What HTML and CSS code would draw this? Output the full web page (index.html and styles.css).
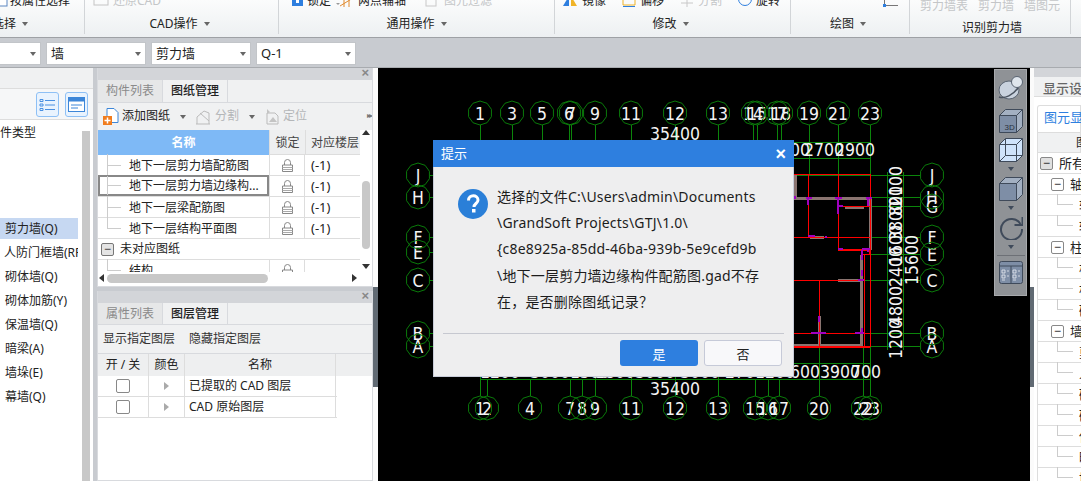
FILE: index.html
```html
<!DOCTYPE html>
<html lang="zh-CN">
<head>
<meta charset="utf-8">
<title>GTJ</title>
<link rel="stylesheet" href="styles.css">
</head>
<body>
<div class="app">
  <header class="ribbon">
    <section class="group g1">
      <div class="rtop"><svg class="ic" width="8" height="7"><rect x="-3" y="-5" width="10" height="11" fill="#fff" stroke="#5a86c0"/></svg><span class="ti t1">按属性选择</span></div>
      <div class="rlabel la1"><span>选择</span><i class="caret"></i></div>
    </section>
    <section class="group g2">
      <div class="rtop dim"><svg class="ic" width="16" height="7"><rect x="1" y="-6" width="14" height="11" fill="none" stroke="#c4c4c4"/></svg><span class="ti">还原CAD</span></div>
      <div class="rlabel"><span>CAD操作</span><i class="caret"></i></div>
    </section>
    <section class="group g3">
      <div class="rtop">
        <svg class="ic" width="11" height="7"><rect x="0" y="-5" width="11" height="11" fill="#2e7fdf"/><rect x="4" y="0" width="3" height="3" fill="#fff"/></svg><span class="ti t2">锁定</span><i class="caret tiny"></i>
        <svg class="ic i2" width="14" height="7"><path d="M0 6 L13 -2 M4 -3 L4 7 M9 -3 L9 7" stroke="#e08a2e" fill="none"/></svg><span class="ti t2">两点辅轴</span><i class="caret tiny"></i>
        <span class="dim rt"><svg class="ic" width="15" height="7"><rect x="1" y="-5" width="10" height="11" fill="none" stroke="#c8c8c8"/></svg><span class="ti">图元过滤</span></span>
      </div>
      <div class="rlabel"><span>通用操作</span><i class="caret"></i></div>
    </section>
    <section class="group g4">
      <div class="rtop">
        <svg class="ic" width="15" height="7"><path d="M0 6 L6 -4 L6 6Z" fill="#2e7fdf"/><path d="M8 6 L8 -4 L14 6Z" fill="#f0b428"/></svg><span class="ti t3">镜像</span>
        <svg class="ic" width="14" height="7"><path d="M1 -3 V5 H13 V-3" fill="none" stroke="#f0b428"/><path d="M1 6.500 H13" stroke="#2e7fdf"/></svg><span class="ti t3">偏移</span>
        <span class="dim rt0"><svg class="ic" width="14" height="7"><path d="M7 -3 V7 M1 3 H13" stroke="#c8c8c8"/></svg><span class="ti t3">分割</span></span>
        <svg class="ic" width="14" height="7"><circle cx="7" cy="-1" r="6.500" fill="none" stroke="#2e7fdf"/></svg><span class="ti">旋转</span>
      </div>
      <div class="rlabel"><span>修改</span><i class="caret"></i></div>
    </section>
    <section class="group g5">
      <div class="rtop"><svg class="ic" width="16" height="7"><path d="M1.500 -2 V5.500 H15" fill="none" stroke="#777"/><rect x="0" y="4" width="3" height="3" fill="#2e7fdf"/></svg></div>
      <div class="rlabel"><span>绘图</span><i class="caret"></i></div>
    </section>
    <section class="group g6">
      <div class="rtop tall dim"><span class="ti t4">剪力墙表</span><span class="ti t4">剪力墙</span><span class="ti">墙图元</span></div>
      <div class="rlabel low"><span>识别剪力墙</span></div>
    </section>
    <section class="group g7"></section>
  </header>

  <div class="combos">
    <div class="combo c0"><i class="caret"></i></div>
    <div class="combo"><span>墙</span><i class="caret"></i></div>
    <div class="combo"><span>剪力墙</span><i class="caret"></i></div>
    <div class="combo"><span>Q-1</span><i class="caret"></i></div>
  </div>

  <main class="work">
    <aside class="nav">
      <div class="nav-band"></div>
      <div class="nav-tools">
        <button class="tbtn"><svg width="17" height="15" viewBox="0 0 17 15"><path d="M1 2.500h3v2H1zM1 7h3v2H1zM1 11.500h3v2H1z" fill="none" stroke="#4a90e2"/><path d="M6 3.500h10M6 8h10M6 12.500h10" stroke="#4a90e2"/></svg></button>
        <button class="tbtn"><svg width="17" height="15" viewBox="0 0 17 15"><rect x=".5" y=".5" width="16" height="14" fill="#fff" stroke="#3d86d8"/><rect x=".5" y=".5" width="16" height="4" fill="#3d86d8"/><path d="M3 8h11M3 11h7" stroke="#3d86d8"/></svg></button>
      </div>
      <div class="nav-body">
        <div class="nav-list">
          <div class="nav-head">构件类型</div>
          <div class="nav-item sel">剪力墙(Q)</div>
          <div class="nav-item">人防门框墙(RF)</div>
          <div class="nav-item">砌体墙(Q)</div>
          <div class="nav-item">砌体加筋(Y)</div>
          <div class="nav-item">保温墙(Q)</div>
          <div class="nav-item">暗梁(A)</div>
          <div class="nav-item">墙垛(E)</div>
          <div class="nav-item">幕墙(Q)</div>
        </div>
        <div class="nav-scroll"></div>
      </div>
    </aside>

    <div class="mid">
      <section class="panel up">
        <div class="grip"><span class="x">×</span></div>
        <div class="tabs"><span class="tab off">构件列表</span><span class="tab on">图纸管理</span></div>
        <div class="tools">
          <svg class="ti-ic" width="16" height="18" viewBox="0 0 16 18"><path d="M4 .5h7l4 4v10H4z" fill="#fff" stroke="#3d86d8"/><rect x="0" y="8" width="9" height="9" fill="#f07c1e"/><path d="M4.500 9.500v6M1.500 12.500h6" stroke="#fff" stroke-width="1.500"/></svg>
          <span class="lbl a">添加图纸</span><i class="caret c1"></i>
          <svg class="ti-ic s2" width="16" height="16" viewBox="0 0 16 16"><path d="M1 15h14M2 15V8l7-6 5 2v11M5 4l9 8" fill="none" stroke="#bbb"/></svg>
          <span class="lbl g s">分割</span><i class="caret c2"></i>
          <svg class="ti-ic s3" width="15" height="17" viewBox="0 0 15 17"><path d="M3 5h8l3 3v8H3z" fill="none" stroke="#bbb"/><path d="M3 1l3 3-3 2zM5 14l4-5 4 5z" fill="#c4c4c4"/></svg>
          <span class="lbl g">定位</span><span class="more">▸▸</span>
        </div>
        <div class="tbl-wrap">
          <div class="tbl">
            <div class="tr th"><span class="blue">名称</span><span class="hc">锁定</span><span class="hc clip">对应楼层</span></div>
            <div class="tr"><span class="nm tree">地下一层剪力墙配筋图</span><span class="lk"><svg width="11" height="13" viewBox="0 0 11 13"><use href="#lock"/></svg></span><span class="fl">(-1)</span></div>
            <div class="tr cur"><span class="nm tree">地下一层剪力墙边缘构...</span><span class="lk"><svg width="11" height="13" viewBox="0 0 11 13"><use href="#lock"/></svg></span><span class="fl">(-1)</span></div>
            <div class="tr"><span class="nm tree">地下一层梁配筋图</span><span class="lk"><svg width="11" height="13" viewBox="0 0 11 13"><use href="#lock"/></svg></span><span class="fl">(-1)</span></div>
            <div class="tr"><span class="nm tree end">地下一层结构平面图</span><span class="lk"><svg width="11" height="13" viewBox="0 0 11 13"><use href="#lock"/></svg></span><span class="fl">(-1)</span></div>
            <div class="tr grp"><span class="minus">−</span><span>未对应图纸</span></div>
            <div class="tr"><span class="nm tree end">结构</span><span class="lk"><svg width="11" height="13" viewBox="0 0 11 13"><use href="#lock"/></svg></span><span class="fl"></span></div>
          </div>
          <div class="vbar"><i class="up-a"></i><b></b><i class="dn-a"></i></div>
        </div>
        <div class="hbar"><i class="lf-a"></i><b></b><i class="rt-a"></i></div>
      </section>

      <section class="panel low">
        <div class="grip"><span class="x">×</span></div>
        <div class="tabs short"><span class="tab off">属性列表</span><span class="tab on">图层管理</span></div>
        <div class="tools two"><span>显示指定图层</span><span>隐藏指定图层</span></div>
        <div class="ltbl">
          <div class="lr lh"><span>开 / 关</span><span>颜色</span><span>名称</span></div>
          <div class="lr"><span><i class="cb"></i></span><span><i class="tri"></i></span><span class="ln">已提取的 CAD 图层</span></div>
          <div class="lr"><span><i class="cb"></i></span><span><i class="tri"></i></span><span class="ln">CAD 原始图层</span></div>
        </div>
      </section>
    </div>

    <div class="split"><b></b></div>

    <div class="canvas">
      <svg class="draw" viewBox="378 68 652 413" width="652" height="413">
        <defs>
          <polygon id="bub" points="0,-12 7.050,-9.710 11.410,-3.710 11.410,3.710 7.050,9.710 0,12 -7.050,9.710 -11.410,3.710 -11.410,-3.710 -7.050,-9.710" fill="none" stroke="#0a7a0a" stroke-width="1"/>
          <g id="lock"><path d="M2.500 6V3.500a3 3 0 0 1 6 0V6" fill="none" stroke="#888"/><path d="M.5 6h10v6.500H.5z" fill="#fff" stroke="#888"/><path d="M.5 8.500h10M.5 10.500h10" stroke="#aaa"/></g>
        </defs>
        <g class="gl">
          <path d="M480 125V396M487 379V396M512 125V140M530 379V396M542 125V140M569 125V140M571 125V140M570 379V396M582 379V396M595 125V396M631 125V396M675 125V396M718 125V396M753 125V140M757 125V140M755 379V396M768 379V396M779 379V396M777 125V140M781 125V140M809 125V174M838 125V174M870 125V174M819 347V396M863 347V396M870 347V396"/>
          <path d="M430 175H920M430 197H920M430 237H920M430 252H440M430 280H920M430 333H920M430 346H920M870 206H920M870 254H920"/>
          <path d="M480 379H870M794 363H870M794 158H870M790 142H870M887 172V350M903 172V350"/>
        </g>
        <g class="gy">
          <path d="M795 174V198H870V250M845 207H864M810 237H824M838 280H862M861 255V345H794M819 316V345"/>
        </g>
        <g class="rd">
          <path d="M794 174H870V347M808 174V237M838 174V250M794 237H870M838 206H870M862 254H870M794 280H862M819 280V347M794 333H870M864 254V346"/>
          <path class="thick" d="M838 250H870V254M794 347H870"/>
        </g>
        <g class="mg">
          <path d="M795 196V199M806 198H812M808 198V205M835 198H842M838 198V210M866 198H872M868 198V206M838 206H843M838 210V214M808 236H815M825 237H827M838 249H843M862 249H870M868 248V252M862 250V260M862 270V276M858 280H864M819 316V322M811 333H826M855 333H864M862 328V333"/>
        </g>
        <g class="tx">
          <text x="480" y="120">1</text><text x="512" y="120">3</text><text x="542" y="120">5</text><text x="569" y="120">6</text><text x="571" y="120">7</text><text x="595" y="120">9</text><text x="631" y="120">11</text><text x="675" y="120">12</text><text x="718" y="120">13</text><text x="753" y="120">14</text><text x="757" y="120">15</text><text x="777" y="120">17</text><text x="781" y="120">18</text><text x="809" y="120">19</text><text x="838" y="120">21</text><text x="870" y="120">23</text>
          <text x="675" y="140">35400</text><text x="675" y="395">35400</text>
          <text x="790" y="156">2100</text><text x="824" y="156">2700</text><text x="855" y="156">2900</text>
          <text x="500" y="378">1200</text><text x="550" y="378">3000</text><text x="590" y="378">1500</text><text x="615" y="378">1800</text><text x="655" y="378">3000</text><text x="700" y="378">3000</text><text x="745" y="378">2700</text><text x="775" y="378">1200</text>
          <text x="805" y="378">600</text><text x="840" y="378">3900</text><text x="866" y="378">700</text>
          <text x="480" y="415">1</text><text x="487" y="415">2</text><text x="530" y="415">4</text><text x="570" y="415">7</text><text x="582" y="415">8</text><text x="595" y="415">9</text><text x="631" y="415">11</text><text x="675" y="415">12</text><text x="718" y="415">13</text><text x="755" y="415">15</text><text x="768" y="415">16</text><text x="779" y="415">17</text><text x="819" y="415">20</text><text x="863" y="415">22</text><text x="870" y="415">23</text>
          <text x="418" y="181.500">J</text><text x="418" y="203.500">H</text><text x="418" y="243.500">F</text><text x="418" y="258.500">E</text><text x="418" y="286.500">C</text><text x="418" y="339.500">B</text><text x="418" y="352.500">A</text>
          <text x="932" y="181.500">J</text><text x="932" y="203.500">H</text><text x="932" y="212.500">G</text><text x="932" y="243.500">F</text><text x="932" y="260.500">E</text><text x="932" y="286.500">C</text><text x="932" y="339.500">B</text><text x="932" y="352.500">A</text>
          <text transform="translate(902 339) rotate(-90)">1200</text><text transform="translate(902 306) rotate(-90)">4800</text><text transform="translate(902 267) rotate(-90)">2400</text><text transform="translate(902 245) rotate(-90)">1600</text><text transform="translate(902 221) rotate(-90)">3800</text><text transform="translate(902 201) rotate(-90)">800</text><text transform="translate(902 186) rotate(-90)">2100</text>
          <text transform="translate(918 260) rotate(-90)">15600</text>
        </g>
        <g>
          <use href="#bub" x="480" y="113"/><use href="#bub" x="512" y="113"/><use href="#bub" x="542" y="113"/><use href="#bub" x="569" y="113"/><use href="#bub" x="571" y="113"/><use href="#bub" x="595" y="113"/><use href="#bub" x="631" y="113"/><use href="#bub" x="675" y="113"/><use href="#bub" x="718" y="113"/><use href="#bub" x="753" y="113"/><use href="#bub" x="757" y="113"/><use href="#bub" x="777" y="113"/><use href="#bub" x="781" y="113"/><use href="#bub" x="809" y="113"/><use href="#bub" x="838" y="113"/><use href="#bub" x="870" y="113"/>
          <use href="#bub" x="480" y="408"/><use href="#bub" x="487" y="408"/><use href="#bub" x="530" y="408"/><use href="#bub" x="570" y="408"/><use href="#bub" x="582" y="408"/><use href="#bub" x="595" y="408"/><use href="#bub" x="631" y="408"/><use href="#bub" x="675" y="408"/><use href="#bub" x="718" y="408"/><use href="#bub" x="755" y="408"/><use href="#bub" x="768" y="408"/><use href="#bub" x="779" y="408"/><use href="#bub" x="819" y="408"/><use href="#bub" x="863" y="408"/><use href="#bub" x="870" y="408"/>
          <use href="#bub" x="418" y="175"/><use href="#bub" x="418" y="197"/><use href="#bub" x="418" y="237"/><use href="#bub" x="418" y="252"/><use href="#bub" x="418" y="280"/><use href="#bub" x="418" y="333"/><use href="#bub" x="418" y="346"/>
          <use href="#bub" x="932" y="175"/><use href="#bub" x="932" y="197"/><use href="#bub" x="932" y="206"/><use href="#bub" x="932" y="237"/><use href="#bub" x="932" y="254"/><use href="#bub" x="932" y="280"/><use href="#bub" x="932" y="333"/><use href="#bub" x="932" y="346"/>
        </g>
      </svg>

      <div class="viewbar">
        <svg class="v-sphere" width="26" height="26" viewBox="0 0 26 26"><ellipse cx="11" cy="15" rx="10" ry="9" fill="#c9d2de" stroke="#5a6472"/><circle cx="19" cy="7" r="5.500" fill="#dfe5ec" stroke="#5a6472"/><path d="M1 22c6 2 14-2 19-9" fill="none" stroke="#4a5360" stroke-width="1.500"/></svg>
        <svg width="24" height="24" viewBox="0 0 24 24"><path d="M.5 6.500l6-6h17v17l-6 6z" fill="#a3b0c2" stroke="#3f4a5a"/><path d="M.5 6.500h17v17H.5z" fill="#7e8ea6" stroke="#3f4a5a"/><path d="M17.500 6.500l6-6" stroke="#3f4a5a"/><text class="v3d" x="5.500" y="21">3D</text></svg>
        <svg width="24" height="24" viewBox="0 0 24 24"><path d="M.5 6.500l6-6h17v17l-6 6H.5z" fill="#cfe3fb" stroke="#3f4a5a"/><path d="M.5 6.500h17v17M17.500 6.500l6-6M6.500 .5v17h17M.5 23.500l6-6" fill="none" stroke="#3f4a5a"/></svg>
        <i class="v-c"></i>
        <svg width="24" height="24" viewBox="0 0 24 24"><path d="M.5 6.500l6-6h17v17l-6 6z" fill="#a3b0c2" stroke="#3f4a5a"/><path d="M.5 6.500h17v17H.5z" fill="#7e8ea6" stroke="#3f4a5a"/><path d="M17.500 6.500l6-6" stroke="#3f4a5a"/></svg>
        <i class="v-c"></i>
        <svg width="24" height="24" viewBox="0 0 24 24"><path d="M21.500 8A10.500 10.500 0 1 0 23 13" fill="none" stroke="#3f4a5a" stroke-width="2"/><path d="M23.500 1v8h-8" fill="none" stroke="#3f4a5a" stroke-width="2"/></svg>
        <i class="v-c"></i>
        <hr class="v-hr">
        <svg width="24" height="23" viewBox="0 0 24 23"><rect x=".5" y=".5" width="23" height="22" rx="2" fill="#7e8ea6" stroke="#3f4a5a"/><path d="M.5 5h23M12 5v18" stroke="#3f4a5a"/><path d="M3 9h3v3H3zM3 14h3v3H3zM3 19h3M14 9h3v3h-3zM14 14h3v3h-3zM14 19h3M8 10h2M8 15h2M19 10h2M19 15h2" fill="none" stroke="#e8ecf2" stroke-width=".8"/></svg>
      </div>

      <div class="dialog" role="dialog">
        <div class="d-title"><span>提示</span><span class="d-x">×</span></div>
        <div class="d-body">
          <svg class="d-icon" width="30" height="30" viewBox="0 0 30 30"><circle cx="15" cy="15" r="15" fill="#2a7fd8"/><path d="M10.500 11.500c0-6.500 9.500-6 9.500-.5 0 3.500-4 3.500-4 7" fill="none" stroke="#fff" stroke-width="3"/><rect x="14" y="20" width="3.500" height="3.500" fill="#fff"/></svg>
          <p class="d-text">选择的文件C:\Users\admin\Documents<br>\GrandSoft Projects\GTJ\1.0\<br>{c8e8925a-85dd-46ba-939b-5e9cefd9b<br>\地下一层剪力墙边缘构件配筋图.gad不存<br>在，是否删除图纸记录？</p>
        </div>
        <div class="d-foot"><button class="yes">是</button><button class="no">否</button></div>
      </div>
    </div>

    <div class="split right"><b></b></div>

    <aside class="side">
      <div class="s-band"></div>
      <div class="s-tab">显示设置</div>
      <div class="s-sub"><span>图元显示</span></div>
      <div class="s-head">图层</div>
      <div class="s-r r0"><i class="mi dark">−</i>所有构件</div>
      <div class="s-r r1"><i class="mi">−</i>轴网</div>
      <div class="s-r r2"><u></u>轴线</div>
      <div class="s-r r2"><u></u>辅轴</div>
      <div class="s-r r1"><i class="mi">−</i>柱</div>
      <div class="s-r r2"><u></u>柱</div>
      <div class="s-r r2"><u></u>构造柱</div>
      <div class="s-r r2"><u></u>砌体柱</div>
      <div class="s-r r1"><i class="mi">−</i>墙</div>
      <div class="s-r r2"><u></u>剪力墙</div>
      <div class="s-r r2"><u></u>人防门框墙</div>
      <div class="s-r r2"><u></u>砌体墙</div>
      <div class="s-r r2"><u></u>砌体加筋</div>
      <div class="s-r r2"><u></u>保温墙</div>
      <div class="s-r r2"><u></u>暗梁</div>
      <div class="s-r r2"><u></u>墙垛</div>
    </aside>
  </main>
</div>
</body>
</html>
```
FILE: styles.css
```css
* { box-sizing: border-box; }
html, body { margin: 0; height: 100%; overflow: hidden; }
body { font: 12px/1.2 "Noto Sans", "Noto Sans CJK SC", sans-serif; color: #222; }
.app { width: 1081px; height: 481px; display: flex; flex-direction: column; background: #c8cbd0; overflow: hidden; }

/* ribbon */
.ribbon { height: 38px; display: flex; background: linear-gradient(#fbfcfc, #edf0f2); border-bottom: 1px solid #9ea1a5; flex: none; }
.group { display: flex; flex-direction: column; border-right: 1px solid #d2d5d8; height: 34px; flex: none; }
.g1 { width: 85px; }
.g2 { width: 194px; padding-left: 8px; }
.g3 { width: 276px; padding-left: 13px; }
.g4 { width: 236px; padding-left: 8px; }
.g5 { width: 119px; padding-left: 92px; }
.g6 { width: 161px; padding-left: 10px; }
.g7 { width: 10px; border: 0; }
.rtop { height: 7px; flex: none; overflow: hidden; display: flex; align-items: flex-end; white-space: nowrap; }
.rtop.tall { height: 12px; }
.rtop .ic { flex: none; margin-right: 4px; }
.ti { display: block; line-height: 14px; margin-bottom: -1px; flex: none; }
.t1 { margin-left: -2px; }
.t2 { width: 49px; }
.t2 + .caret { margin-right: 0; }
.t3 { width: 40px; }
.t4 { margin-right: 10px; }
.i2 { margin-left: 0; }
.dim { color: #c4c6c8; }
.rt { display: flex; align-items: flex-end; margin-left: 34px; }
.rt0 { display: flex; align-items: flex-end; }
.rlabel { flex: 1; display: flex; align-items: center; justify-content: center; gap: 6px; color: #222; padding-top: 10px; font-size: 12px; margin-bottom: 3px; }
.g2 .rlabel, .g4 .rlabel { margin-left: -12px; }
.g3 .rlabel { margin-left: -13px; }
.g5 .rlabel { margin-left: -96px; }
.g6 .rlabel { margin-left: -6px; }
.la1 { justify-content: flex-start; margin-left: -8px; }
.rlabel.low { padding-top: 9px; }
.caret { display: inline-block; width: 0; height: 0; border: 3.500px solid transparent; border-top: 4px solid #666; border-bottom: 0; flex: none; }
.tiny { margin: 0 8px 2px -20px; border-top-color: #999; border-width: 2px; border-top-width: 2px; border-bottom: 0; }

/* combos */
.combos { height: 30px; flex: none; display: flex; gap: 5px; padding-top: 4px; border-bottom: 1px solid #a8abaf; }
.combo { width: 100px; height: 23px; background: #fff; border: 1px solid #c2c5c9; display: flex; align-items: center; justify-content: space-between; padding: 0 4px; font-size: 13px; }
.combo .caret { margin-left: auto; }
.c0 { width: 41px; border-left: 0; }

/* main */
.work { flex: 1; min-height: 0; display: flex; }
.nav { width: 93px; flex: none; background: #fff; display: flex; flex-direction: column; margin-right: 4px; overflow: hidden; }
.nav-band { height: 21px; background: #f0f1f2; border-bottom: 1px solid #ddd; flex: none; }
.nav-tools { height: 31px; flex: none; display: flex; justify-content: flex-end; gap: 6px; padding: 3px 5px 0 0; border-bottom: 1px solid #ddd; background: #f6f7f8; }
.tbtn { width: 23px; height: 25px; padding: 0; border: 1px solid #8ec0f5; border-radius: 3px; background: #e9f3fe; display: flex; align-items: center; justify-content: center; }
.nav-body { flex: 1; display: flex; min-height: 0; }
.nav-list { width: 82px; flex: none; overflow: hidden; }
.nav-head { margin: 5px 0 77px -12px; white-space: nowrap; height: 16px; line-height: 16px; }
.nav-item { height: 24px; line-height: 23px; padding-left: 5px; white-space: nowrap; overflow: hidden; width: 78px; }
.nav-item:nth-child(3) { padding-left: 4px; }
.sel { height: 21px; line-height: 21px; margin-bottom: 2px; background: #c6d8f2; }
.nav-scroll { width: 8px; background: #c8c8c8; margin-top: 11px; }
.mid { width: 276px; flex: none; display: flex; flex-direction: column; gap: 4px; }
.panel { background: #fff; border: 1px solid #d8dade; border-top: 0; display: flex; flex-direction: column; overflow: hidden; }
.panel.up { height: 219px; flex: none; }
.panel.low { flex: 1; padding: 0; }
.grip { height: 12px; background: #d3d5d9; flex: none; position: relative; }
.x { position: absolute; right: 3px; top: -3px; font: bold 13px/15px "Liberation Sans", sans-serif; color: #888; }
.tabs { height: 23px; flex: none; display: flex; background: #f0f1f2; border-bottom: 1px solid #d8dade; }
.tabs.short { height: 22px; }
.tab { width: 65px; text-align: center; line-height: 22px; font-size: 12px; border-right: 1px solid #d8dade; }
.off { color: #8a8a8a; background: #e6e7e8; }
.on { background: #f0f1f2; font-weight: 500; color: #222; }
.tools { height: 27px; flex: none; background: #f0f1f2; display: flex; align-items: center; padding-left: 5px; position: relative; }
.ti-ic { flex: none; margin-right: 3px; }
.lbl.a { width: 58px; }
.lbl.s { width: 34px; }
.lbl.g { color: #b4b6b8; }
.c1 { margin-right: 9px; }
.c2 { margin-right: 9px; }
.s3, .s2 { margin-right: 4px; }
.more { position: absolute; right: 1px; top: 7px; font-size: 8px; color: #777; letter-spacing: -2px; }
.tbl-wrap { flex: none; height: 142px; display: flex; overflow: hidden; }
.tbl { width: 262px; flex: none; overflow: hidden; }
.tr { display: grid; grid-template-columns: 171px 36px 55px; height: 21px; border-bottom: 1px solid #ddd; align-items: center; }
.th { height: 25px; background: #eeeff0; }
.blue { background: #7eb9f6; color: #fff; font-weight: 700; text-align: center; line-height: 26px; height: 25px; }
.hc { text-align: center; white-space: nowrap; overflow: hidden; border-left: 1px solid #ddd; line-height: 26px; height: 25px; color: #444; }
.clip { text-align: left; padding-left: 5px; }
.nm { padding-left: 31px; position: relative; height: 20px; line-height: 22px; white-space: nowrap; }
.tree::before { content: ""; position: absolute; left: 9px; top: -1px; bottom: -1px; border-left: 1px solid #ccc; }
.tree::after { content: ""; position: absolute; left: 9px; width: 14px; top: 10px; border-top: 1px solid #ccc; }
.tree.end::before { bottom: 9px; }
.lk { border-left: 1px solid #ddd; border-right: 1px solid #ddd; height: 20px; display: flex; align-items: center; justify-content: center; }
.fl { padding-left: 6px; font-size: 13px; height: 20px; line-height: 21px; }
.cur .nm { border: 2px solid #888; height: 21px; line-height: 18px; padding-left: 29px; margin-top: -1px; }
.cur .nm::before { left: 7px; }
.cur .nm::after { left: 7px; top: 8px; }
.grp { display: flex; gap: 6px; padding: 1px 0 0 3px; }
.minus { width: 13px; height: 13px; border: 1px solid #777; border-radius: 2px; background: #e4e4e4; font: 12px/10px "Liberation Sans", sans-serif; text-align: center; color: #333; }
.vbar { flex: 1; position: relative; }
.vbar b { position: absolute; left: 2px; top: 51px; width: 8px; height: 68px; border-radius: 4px; background: #c8c8c8; }
.up-a, .dn-a, .lf-a, .rt-a { position: absolute; width: 0; height: 0; border: 4px solid transparent; }
.up-a { left: 2px; top: 0; border-bottom: 5px solid #333; border-top: 0; }
.dn-a { left: 2px; top: 134px; border-top: 5px solid #333; border-bottom: 0; }
.hbar { height: 13px; flex: none; position: relative; }
.hbar b { position: absolute; left: 9px; top: 2px; width: 161px; height: 9px; border-radius: 5px; background: #c8c8c8; }
.lf-a { left: 1px; top: 2px; border-right: 5px solid #333; border-left: 0; }
.rt-a { left: 254px; top: 2px; border-left: 5px solid #333; border-right: 0; }
.two { gap: 14px; height: 29px; border-bottom: 1px solid #d8dade; color: #333; }
.ltbl { display: flex; flex-direction: column; }
.lr { display: grid; grid-template-columns: 51px 36px 151px; height: 21px; align-items: center; width: 239px; border-bottom: 1px solid #ddd; }
.lr span { height: 20px; display: flex; align-items: center; justify-content: center; border-right: 1px solid #ddd; }
.lh { height: 22px; background: #eeeff0; width: 100%; border-bottom: 0; }
.lh span { height: 22px; font-size: 12px; }
.lh span:last-child { width: 151px; }
.lr .ln { justify-content: flex-start; padding-left: 4px; }
.cb { width: 14px; height: 14px; border: 1px solid #888; border-radius: 2px; background: #fff; }
.tri { width: 0; height: 0; border-left: 5px solid #aaa; border-top: 4px solid transparent; border-bottom: 4px solid transparent; }

/* splitters */
.split { width: 5px; flex: none; background: #fbfbfb; padding-top: 219px; }
.split b { display: block; height: 100px; background: #616a73; }
.split.right { width: 4px; }

/* canvas */
.canvas { width: 652px; flex: none; background: #000; position: relative; overflow: hidden; }
.draw { display: block; }
.gl path { fill: none; stroke: #0b850b; stroke-width: 1; shape-rendering: crispEdges; }
.rd path { fill: none; stroke: #ff0000; stroke-width: 1; shape-rendering: crispEdges; }
.rd .thick { stroke-width: 2; }
.gy path { fill: none; stroke: #8a7470; stroke-width: 3; shape-rendering: crispEdges; }
.mg path { fill: none; stroke: #a000c0; stroke-width: 2.500; shape-rendering: crispEdges; }
.tx text { fill: #f4f4f4; font: 17.500px "DejaVu Sans Condensed", "Liberation Sans", sans-serif; text-anchor: middle; }

.viewbar { position: absolute; left: 616px; top: 1px; width: 33px; height: 227px; background: #8f9296; border: 1px solid #a8aaad; display: flex; flex-direction: column; align-items: center; padding-top: 5px; }
.viewbar svg { flex: none; margin-bottom: 5px; }
.viewbar .v-sphere { margin-bottom: 8px; }
.v-c { width: 0; height: 0; border: 3.500px solid transparent; border-top: 4px solid #3f4a5a; border-bottom: 0; margin-bottom: 6px; flex: none; }
.v-hr { width: 28px; border: 0; border-top: 1px solid #6d7076; margin: 0 0 5px; flex: none; }
.v3d { font: 8px "Liberation Sans", sans-serif; fill: #2a3240; }

.dialog { position: absolute; left: 55px; top: 72px; width: 361px; height: 237px; background: #eeeeef; border: 1px solid #c8ccd8; border-top: 0; display: flex; flex-direction: column; }
.d-title { height: 27px; flex: none; background: #2e7fdf; color: #fff; display: flex; justify-content: space-between; align-items: center; padding: 0 8px 0 8px; margin: 0 -1px; font-size: 13px; }
.d-x { font: bold 18px/18px "Liberation Sans", sans-serif; }
.d-body { flex: 1; display: flex; gap: 9px; padding: 22px 0 0 24px; }
.d-icon { flex: none; }
.d-text { margin: -5px 0 0; font-size: 14px; line-height: 26.200px; letter-spacing: .2px; color: #1c1c1c; white-space: nowrap; }
.d-foot { height: 43px; margin: 0 9px; border-top: 1px solid #c6c8d0; display: flex; justify-content: flex-end; gap: 6px; padding: 6px 2px 0 0; flex: none; }
.d-foot button { width: 78px; height: 26px; border-radius: 3px; font: 13px "Noto Sans CJK SC", sans-serif; }
.yes { background: #2e7fdf; border: 0; color: #fff; }
.no { background: #f8f8fa; border: 1px solid #c6cad8; color: #222; }

/* right */
.side { flex: 1; background: #fff; min-width: 0; overflow: hidden; white-space: nowrap; font-size: 13px; }
.s-band { height: 9px; background: #d3d5d9; }
.s-tab { height: 20px; padding: 2px 0 0 9px; background: #f0f1f2; color: #666; font-weight: 500; line-height: 18px; border-bottom: 1px solid #ddd; }
.s-sub { height: 35px; background: #fff; padding: 8px 0 0 3px; }
.s-sub span { display: block; height: 27px; padding-left: 6px; border: 1px solid #ddd; border-bottom: 0; border-radius: 3px 0 0 0; color: #2e7fdf; line-height: 22px; }
.s-head { height: 21px; background: #f0f1f2; border: 1px solid #ddd; margin-left: 3px; padding-left: 38px; line-height: 20px; font-size: 12px; }
.s-r { height: 21px; border-bottom: 1px solid #ddd; margin-left: 3px; border-left: 1px solid #ddd; display: flex; align-items: center; line-height: 20px; position: relative; }
.mi { font: 12px/10px "Liberation Sans", sans-serif; width: 13px; height: 13px; border: 1px solid #888; border-radius: 2px; text-align: center; flex: none; margin-right: 6px; font-style: normal; background: #fff; }
.mi.dark { background: #e0e0e0; }
.r0 { padding-left: 2px; }
.r1 { padding-left: 13px; }
.r2 { padding-left: 41px; }
.r2 u { position: absolute; left: 19px; top: -1px; width: 16px; height: 11px; border-left: 1px solid #ccc; border-bottom: 1px solid #ccc; text-decoration: none; }
```
